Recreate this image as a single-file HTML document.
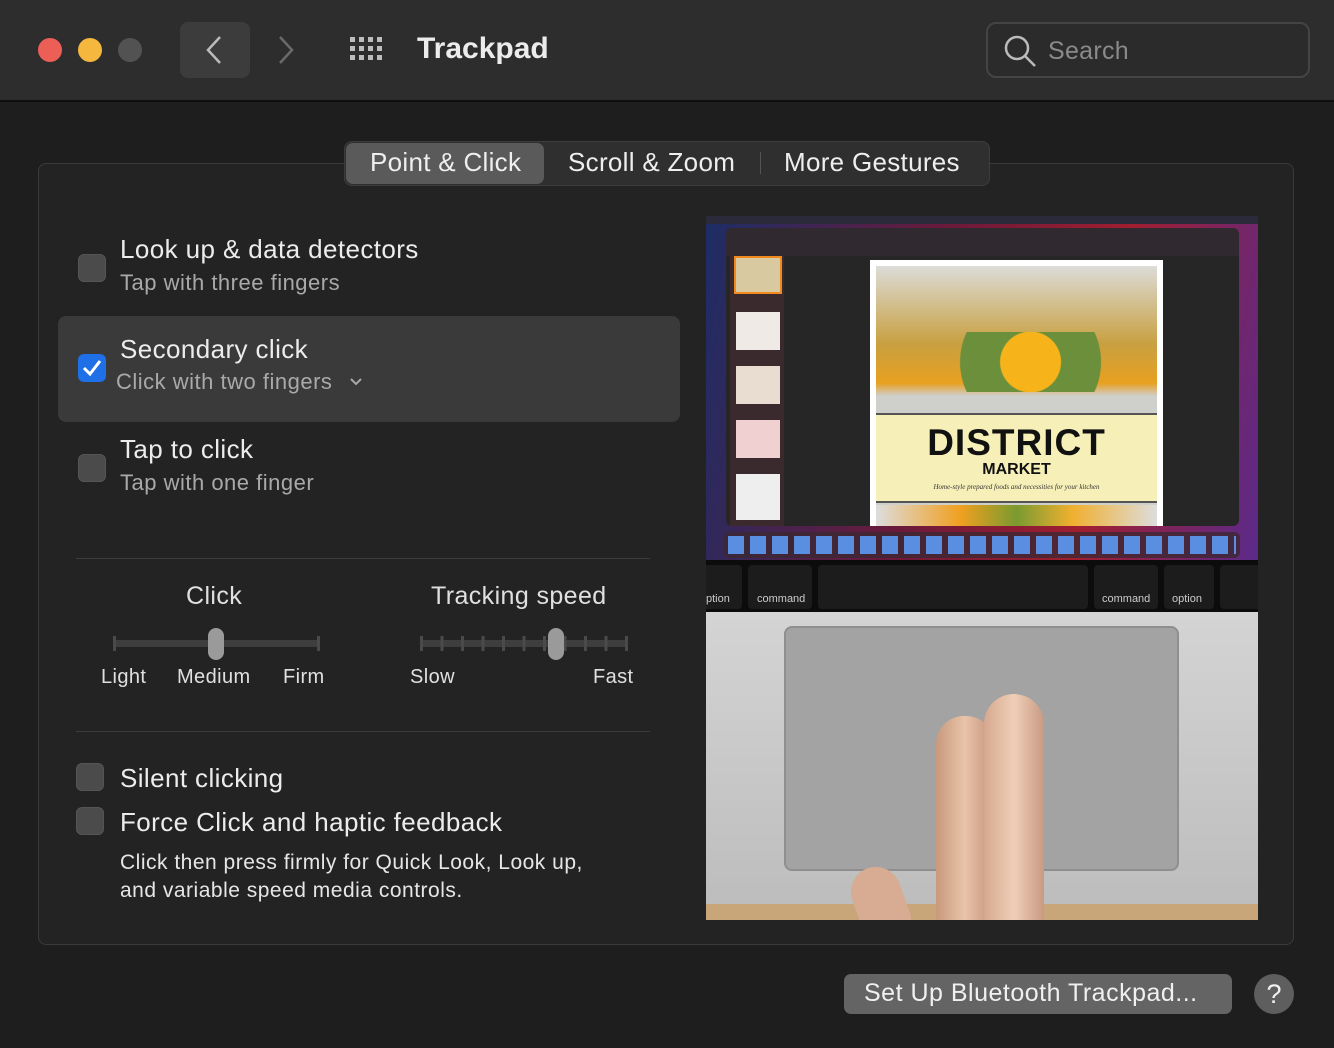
<!DOCTYPE html>
<html><head><meta charset="utf-8"><style>
*{margin:0;padding:0;box-sizing:border-box}
body{width:1334px;height:1048px;background:#1e1e1e;font-family:"Liberation Sans",sans-serif;color:#e6e6e6;position:relative;overflow:hidden}
.a{position:absolute;white-space:nowrap}
.tb{left:0;top:0;width:1334px;height:102px;background:#2d2d2d;border-bottom:2px solid #0f0f0f}
.dot{width:24px;height:24px;border-radius:50%;top:38px}
.cb{width:28px;height:28px;border-radius:6px;background:#4b4b4b;border:1px solid #555}
.t1{font-size:26px;color:#ececec;letter-spacing:0.4px}
.t2{font-size:22px;color:#a9a9a9;letter-spacing:0.5px}
.lbl{font-size:20px;color:#e0e0e0;letter-spacing:0.4px}
</style></head><body>
<div class="a tb"></div>
<div class="a dot" style="left:38px;background:#ec5f57"></div>
<div class="a dot" style="left:78px;background:#f6b73f"></div>
<div class="a dot" style="left:118px;background:#525252"></div>
<div class="a" style="left:180px;top:22px;width:70px;height:56px;border-radius:8px;background:#3c3c3c"></div>
<svg class="a" style="left:200px;top:34px" width="30" height="32"><path d="M20 3 L8 16 L20 29" stroke="#bbb" stroke-width="2.5" fill="none"/></svg>
<svg class="a" style="left:272px;top:34px" width="30" height="32"><path d="M8 3 L20 16 L8 29" stroke="#6a6a6a" stroke-width="2.5" fill="none"/></svg>
<svg class="a" style="left:350px;top:37px" width="38" height="26"><g fill="#bdbdbd">
<rect x="0" y="0" width="5" height="5"/><rect x="9" y="0" width="5" height="5"/><rect x="18" y="0" width="5" height="5"/><rect x="27" y="0" width="5" height="5"/>
<rect x="0" y="9" width="5" height="5"/><rect x="9" y="9" width="5" height="5"/><rect x="18" y="9" width="5" height="5"/><rect x="27" y="9" width="5" height="5"/>
<rect x="0" y="18" width="5" height="5"/><rect x="9" y="18" width="5" height="5"/><rect x="18" y="18" width="5" height="5"/><rect x="27" y="18" width="5" height="5"/></g></svg>
<div class="a" style="left:417px;top:32px;font-size:30px;font-weight:bold;color:#ececec">Trackpad</div>
<div class="a" style="left:986px;top:22px;width:324px;height:56px;border-radius:10px;border:2px solid #444;background:#2b2b2b"></div>
<svg class="a" style="left:1002px;top:33px" width="36" height="36"><circle cx="15" cy="15" r="11" stroke="#bbb" stroke-width="2.5" fill="none"/><path d="M23 23 L33 33" stroke="#bbb" stroke-width="2.5"/></svg>
<div class="a" style="left:1048px;top:37px;font-size:25px;color:#8a8a8a;letter-spacing:0.3px">Search</div>

<div class="a" style="left:38px;top:163px;width:1256px;height:782px;border:1px solid #3a3a3a;border-radius:8px;background:#232323"></div>
<div class="a" style="left:344px;top:141px;width:646px;height:45px;border-radius:8px;background:#2f2f2f;border:1px solid #3d3d3d"></div>
<div class="a" style="left:346px;top:143px;width:198px;height:41px;border-radius:7px;background:#5a5a5a"></div>
<div class="a" style="left:370px;top:147px;font-size:26px;color:#eee;letter-spacing:0.3px">Point &amp; Click</div>
<div class="a" style="left:568px;top:147px;font-size:26px;color:#eee;letter-spacing:0.3px">Scroll &amp; Zoom</div>
<div class="a" style="left:760px;top:152px;width:1px;height:22px;background:#555"></div>
<div class="a" style="left:784px;top:147px;font-size:26px;color:#eee;letter-spacing:0.3px">More Gestures</div>

<div class="a cb" style="left:78px;top:254px"></div>
<div class="a t1" style="left:120px;top:234px">Look up &amp; data detectors</div>
<div class="a t2" style="left:120px;top:270px">Tap with three fingers</div>
<div class="a" style="left:58px;top:316px;width:622px;height:106px;border-radius:8px;background:#3a3a3a"></div>
<div class="a" style="left:78px;top:354px;width:28px;height:28px;border-radius:6px;background:#1f6fe6"></div>
<svg class="a" style="left:78px;top:354px" width="28" height="28"><path d="M6 14 L12 20 L22 7" stroke="#fff" stroke-width="3" fill="none"/></svg>
<div class="a t1" style="left:120px;top:334px">Secondary click</div>
<div class="a t2" style="left:116px;top:369px">Click with two fingers</div>
<svg class="a" style="left:349px;top:377px" width="14" height="10"><path d="M2 2 L7 7 L12 2" stroke="#a9a9a9" stroke-width="2" fill="none"/></svg>
<div class="a cb" style="left:78px;top:454px"></div>
<div class="a t1" style="left:120px;top:434px">Tap to click</div>
<div class="a t2" style="left:120px;top:470px">Tap with one finger</div>

<div class="a" style="left:76px;top:558px;width:574px;height:1px;background:#3c3c3c"></div>
<div class="a lbl" style="left:186px;top:582px;font-size:25px">Click</div>
<div class="a lbl" style="left:431px;top:582px;font-size:25px">Tracking speed</div>
<div class="a" style="left:114px;top:640px;width:205px;height:7px;background:#3e3e3e;border-radius:2px"></div>
<div class="a" style="left:113px;top:636px;width:3px;height:15px;background:#4a4a4a"></div>
<div class="a" style="left:317px;top:636px;width:3px;height:15px;background:#4a4a4a"></div>
<div class="a" style="left:208px;top:628px;width:16px;height:32px;border-radius:8px;background:#9a9a9a"></div>
<div class="a" style="left:421px;top:640px;width:206px;height:7px;background:#3e3e3e;border-radius:2px"></div>
<div class="a" style="left:420px;top:636px;width:208px;height:15px;background:repeating-linear-gradient(90deg,#4a4a4a 0 3px,transparent 3px 20.5px)"></div>
<div class="a" style="left:548px;top:628px;width:16px;height:32px;border-radius:8px;background:#9a9a9a"></div>
<div class="a lbl" style="left:101px;top:666px">Light</div>
<div class="a lbl" style="left:177px;top:666px">Medium</div>
<div class="a lbl" style="left:283px;top:666px">Firm</div>
<div class="a lbl" style="left:410px;top:666px">Slow</div>
<div class="a lbl" style="left:593px;top:666px">Fast</div>
<div class="a" style="left:76px;top:731px;width:574px;height:1px;background:#3c3c3c"></div>

<div class="a cb" style="left:76px;top:763px"></div>
<div class="a t1" style="left:120px;top:763px">Silent clicking</div>
<div class="a cb" style="left:76px;top:807px"></div>
<div class="a t1" style="left:120px;top:807px">Force Click and haptic feedback</div>
<div class="a" style="left:120px;top:849px;font-size:21px;line-height:28px;color:#e6e6e6;letter-spacing:0.5px">Click then press firmly for Quick Look, Look up,<br>and variable speed media controls.</div>

<!-- image -->
<div class="a" style="left:706px;top:216px;width:552px;height:704px;overflow:hidden;background:#c6c6c6">
 <div class="a" style="left:0;top:0;width:552px;height:344px;background:linear-gradient(100deg,#1d2d66 0%,#6b1a3a 40%,#a01e30 70%,#5b2a8a 100%)"></div>
 <div class="a" style="left:0;top:0;width:552px;height:8px;background:#2a2a3a"></div>
 <div class="a" style="left:20px;top:12px;width:513px;height:298px;background:#262626;border-radius:6px"></div>
 <div class="a" style="left:20px;top:12px;width:513px;height:28px;background:#302a30;border-radius:6px 6px 0 0"></div>
 <div class="a" style="left:24px;top:40px;width:54px;height:270px;background:#3a2a2e"></div>
 <div class="a" style="left:28px;top:40px;width:48px;height:38px;border:2px solid #f08a1c;background:#d8c9a0"></div>
 <div class="a" style="left:30px;top:96px;width:44px;height:38px;background:#f0eae6"></div>
 <div class="a" style="left:30px;top:150px;width:44px;height:38px;background:#e8ddd0"></div>
 <div class="a" style="left:30px;top:204px;width:44px;height:38px;background:#f0d0d0"></div>
 <div class="a" style="left:30px;top:258px;width:44px;height:46px;background:#eee"></div>
 <div class="a" style="left:164px;top:44px;width:293px;height:266px;background:#fff"></div>
 <div class="a" style="left:170px;top:50px;width:281px;height:260px;background:linear-gradient(180deg,#dcdcd8 0%,#c8a040 30%,#e8a020 45%,#cfcfcc 50%)"></div>
 <div class="a" style="left:170px;top:116px;width:281px;height:60px;background:radial-gradient(circle at 55% 50%,#f6b31a 0 30px,#6b8f3a 31px 70px,transparent 71px)"></div>
 <div class="a" style="left:170px;top:197px;width:281px;height:90px;background:#f6f0b8;border-top:2px solid #555;border-bottom:2px solid #555"></div>
 <div class="a" style="left:170px;top:206px;width:281px;text-align:center;font-size:37px;font-weight:bold;color:#111;letter-spacing:1px">DISTRICT</div>
 <div class="a" style="left:170px;top:245px;width:281px;text-align:center;font-size:16px;font-weight:bold;color:#111">MARKET</div>
 <div class="a" style="left:170px;top:267px;width:281px;text-align:center;font-size:7px;font-style:italic;color:#333;font-family:'Liberation Serif',serif">Home-style prepared foods and necessities for your kitchen</div>
 <div class="a" style="left:170px;top:289px;width:281px;height:21px;background:linear-gradient(90deg,#ddd,#f0a020 30%,#7a9a30 50%,#f0b030 70%,#ddd)"></div>
 <div class="a" style="left:18px;top:316px;width:516px;height:26px;border-radius:6px;background:rgba(60,40,50,.8)"></div>
 <div class="a" style="left:22px;top:320px;width:508px;height:18px;background:repeating-linear-gradient(90deg,#5a8ee0 0 16px,transparent 16px 22px)"></div>
 <div class="a" style="left:0;top:344px;width:552px;height:52px;background:#0c0c0c"></div>
 <div class="a" style="left:-4px;top:349px;width:40px;height:44px;background:#1c1c1c;border-radius:4px"></div>
 <div class="a" style="left:42px;top:349px;width:64px;height:44px;background:#1c1c1c;border-radius:4px"></div>
 <div class="a" style="left:112px;top:349px;width:270px;height:44px;background:#1c1c1c;border-radius:4px"></div>
 <div class="a" style="left:388px;top:349px;width:64px;height:44px;background:#1c1c1c;border-radius:4px"></div>
 <div class="a" style="left:458px;top:349px;width:50px;height:44px;background:#1c1c1c;border-radius:4px"></div>
 <div class="a" style="left:514px;top:349px;width:44px;height:44px;background:#1c1c1c;border-radius:4px"></div>
 <div class="a" style="left:0;top:377px;font-size:11px;color:#ccc">ption</div>
 <div class="a" style="left:51px;top:377px;font-size:11px;color:#ccc">command</div>
 <div class="a" style="left:396px;top:377px;font-size:11px;color:#ccc">command</div>
 <div class="a" style="left:466px;top:377px;font-size:11px;color:#ccc">option</div>
 <div class="a" style="left:0;top:396px;width:552px;height:294px;background:linear-gradient(180deg,#d4d4d4,#bdbdbd)"></div>
 <div class="a" style="left:78px;top:410px;width:395px;height:245px;border-radius:8px;background:#a3a3a3;border:2px solid #8f8f8f"></div>
 <div class="a" style="left:0;top:688px;width:552px;height:16px;background:#c9a57a"></div>
 <div class="a" style="left:230px;top:500px;width:58px;height:240px;border-radius:28px;background:linear-gradient(90deg,#c9997c,#e8c4aa,#c4907a)"></div>
 <div class="a" style="left:278px;top:478px;width:60px;height:260px;border-radius:30px;background:linear-gradient(90deg,#d6a88e,#efcfb8,#c99a82)"></div>
 <div class="a" style="left:150px;top:650px;width:50px;height:80px;border-radius:25px;background:#d7ac92;transform:rotate(-20deg)"></div>
</div>

<div class="a" style="left:844px;top:974px;width:388px;height:40px;border-radius:7px;background:#646464"></div>
<div class="a" style="left:864px;top:979px;font-size:25px;color:#f0f0f0;letter-spacing:0.5px">Set Up Bluetooth Trackpad...</div>
<div class="a" style="left:1254px;top:974px;width:40px;height:40px;border-radius:50%;background:#5e5e5e;text-align:center;font-size:27px;line-height:40px;color:#f0f0f0">?</div>
</body></html>
